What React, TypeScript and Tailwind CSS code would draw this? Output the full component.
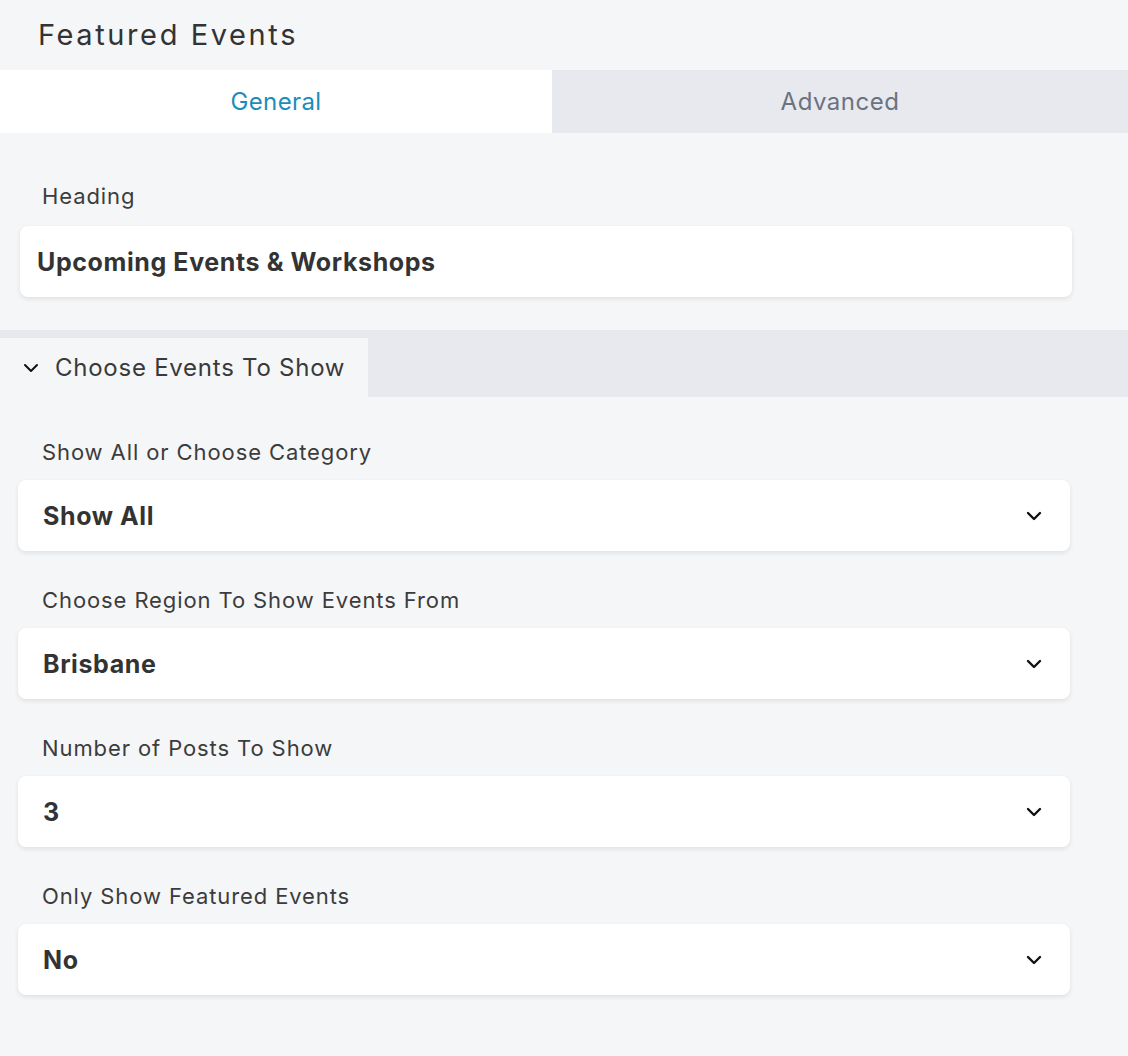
import React from 'react'

const Chevron = ({ className = '' }: { className?: string }) => (
  <svg className={className} width="16" height="10" viewBox="0 0 16 10" fill="none">
    <path d="M2 2 L8 8 L14 2" stroke="#111" strokeWidth="2.4" strokeLinecap="round" strokeLinejoin="round" />
  </svg>
)

type SelectField = { label: string; value: string }

const fields: SelectField[] = [
  { label: 'Show All or Choose Category', value: 'Show All' },
  { label: 'Choose Region To Show Events From', value: 'Brisbane' },
  { label: 'Number of Posts To Show', value: '3' },
  { label: 'Only Show Featured Events', value: 'No' },
]

const App = () => {
  return (
    <div className="w-[1128px] min-h-[1056px] bg-[#f5f6f8] font-['Inter',sans-serif] text-[#333]">
      <div className="h-[70px] flex items-center pl-[38px]">
        <h1 className="text-[29px] tracking-[2.6px] text-[#333] font-normal">Featured Events</h1>
      </div>

      <div className="flex h-[63px]">
        <div className="w-[552px] bg-white flex items-center justify-center text-[24px] tracking-[0.4px] text-[#1b8dba]">General</div>
        <div className="flex-1 bg-[#e7e9ee] flex items-center justify-center text-[24px] tracking-[0.5px] text-[#6b7280]">Advanced</div>
      </div>

      <div className="pt-[49px] pl-[20px] pr-[56px]">
        <label className="block pl-[22px] text-[22px] leading-[28px] tracking-[0.9px] text-[#3c3c3c]">Heading</label>
        <div className="mt-[16px] h-[71px] rounded-[8px] bg-white shadow-[0_2px_5px_rgba(0,0,0,0.09)] flex items-center pl-[17px] pt-[2px] text-[25px] tracking-[0.6px] font-bold text-[#333]">
          Upcoming Events &amp; Workshops
        </div>
      </div>

      <div className="mt-[33px] h-[67px] bg-[#e7e9ee] flex items-end">
        <div className="w-[368px] h-[59px] bg-[#f5f6f8] flex items-center gap-[16px] pl-[23px]">
          <svg width="16" height="10" viewBox="0 0 16 10" fill="none">
            <path d="M2 2 L8 8 L14 2" stroke="#111" strokeWidth="2" strokeLinecap="round" strokeLinejoin="round" />
          </svg>
          <span className="text-[24px] tracking-[0.75px] text-[#3a3a3a]">Choose Events To Show</span>
        </div>
      </div>

      <div className="pt-[41px] pl-[18px] pr-[58px] flex flex-col gap-[35px]">
        {fields.map((f) => (
          <div key={f.label}>
            <label className="block pl-[24px] text-[22px] leading-[28px] tracking-[0.9px] text-[#3c3c3c]">{f.label}</label>
            <div className="mt-[14px] h-[71px] rounded-[8px] bg-white shadow-[0_2px_5px_rgba(0,0,0,0.09)] flex items-center justify-between pl-[25px] pr-[28px]">
              <span className="text-[25px] tracking-[0.6px] font-bold text-[#333] pt-[2px]">{f.value}</span>
              <Chevron />
            </div>
          </div>
        ))}
      </div>
    </div>
  )
}

export default App
